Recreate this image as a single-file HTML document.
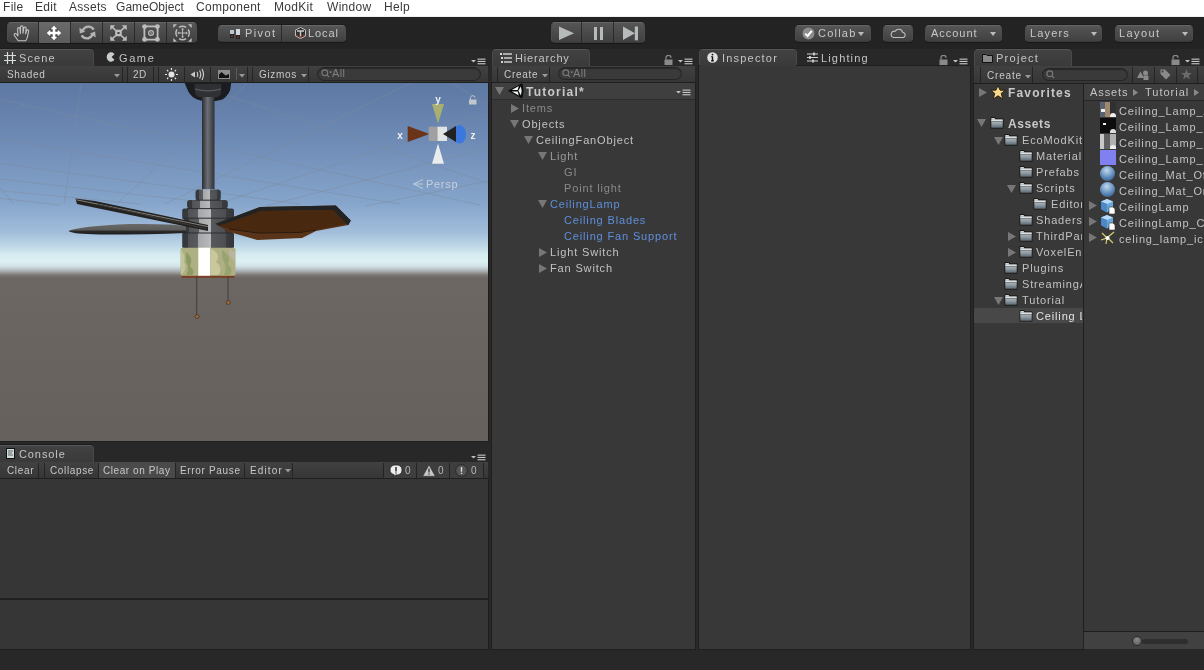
<!DOCTYPE html>
<html><head><meta charset="utf-8">
<style>
*{margin:0;padding:0;box-sizing:border-box}
html,body{width:1204px;height:670px;overflow:hidden;background:#282828;font-family:"Liberation Sans",sans-serif;}
.a{position:absolute}
.t{position:absolute;will-change:transform;white-space:nowrap;font-size:11px;letter-spacing:0.6px;color:#c4c4c4;line-height:16px}
#menu{left:0;top:0;width:1204px;height:17px;background:#fff;border-bottom:1px solid #f0f0f0}
#menu span{position:absolute;will-change:transform;top:0;font-size:12px;line-height:15px;color:#3a3a3a;letter-spacing:0.3px}
#tb{left:0;top:17px;width:1204px;height:32px;background:#232323}
.btn{position:absolute;border-radius:4px;background:linear-gradient(#555555,#404040);border:1px solid #4c4c4c;border-top-color:#666;border-bottom-color:#3a3a3a;box-shadow:0 1px 0 #181818,0 -1px 0 #1c1c1c}
.tab{position:absolute;top:49px;height:17px;border-radius:4px 4px 0 0;background:linear-gradient(#424242,#3a3a3a);border:1px solid #4a4a4a;border-top-color:#555;border-bottom:none;box-shadow:0 -1px 0 #1e1e1e}
.panel{position:absolute;background:#383838;box-shadow:0 0 0 1px #1f1f1f}
.strip{position:absolute;background:linear-gradient(#414141,#363636);border-bottom:1px solid #1c1c1c}
</style></head><body><svg width="0" height="0" style="position:absolute"><defs><linearGradient id="fg" x1="0" y1="0" x2="0" y2="1"><stop offset="0" stop-color="#d0d4d4"/><stop offset="0.45" stop-color="#a8b0b4"/><stop offset="1" stop-color="#5c6c78"/></linearGradient></defs></svg>
<div id="menu" class="a">
<span style="left:3px">File</span><span style="left:35px">Edit</span><span style="left:69px">Assets</span><span style="left:116px;letter-spacing:0.05px">GameObject</span><span style="left:196px">Component</span><span style="left:274px">ModKit</span><span style="left:327px">Window</span><span style="left:384px">Help</span>
</div>
<div id="tb" class="a"></div>
<!-- tool buttons -->
<div class="btn" style="left:7px;top:22px;width:190px;height:21px"></div>
<div class="a" style="left:38px;top:22px;width:32px;height:21px;background:linear-gradient(#6a6a6a,#5c5c5c)"></div>
<div class="a" style="left:38px;top:22px;width:1px;height:21px;background:#2a2a2a"></div>
<div class="a" style="left:70px;top:22px;width:1px;height:21px;background:#2a2a2a"></div>
<div class="a" style="left:102px;top:22px;width:1px;height:21px;background:#2a2a2a"></div>
<div class="a" style="left:134px;top:22px;width:1px;height:21px;background:#2a2a2a"></div>
<div class="a" style="left:166px;top:22px;width:1px;height:21px;background:#2a2a2a"></div>
<svg class="a" style="left:13px;top:25px" width="18" height="17" viewBox="0 0 18 17" fill="none" stroke="#c4c4c4" stroke-width="1.1" stroke-linejoin="round" stroke-linecap="round">
<path d="M5.2 15.8 L1.6 10.8 Q0.6 9.4 1.8 8.6 Q2.8 8.2 3.8 9.4 L5 10.8 L4.6 4.2 Q4.6 2.6 5.8 2.6 Q6.8 2.6 7 4 L7.4 8.4 L7.4 2.2 Q7.6 0.8 8.8 0.8 Q10 0.9 10 2.2 L10 8.2 L10.8 3 Q11.2 1.8 12.3 2 Q13.3 2.3 13.1 3.6 L12.6 8.8 L13.6 5.6 Q14.1 4.6 15 4.9 Q15.9 5.3 15.6 6.5 L14.4 12.2 Q13.8 14.6 12.6 15.8 Z"/>
</svg>
<svg class="a" style="left:46px;top:25px" width="16" height="16" viewBox="0 0 16 16" fill="#fff" stroke="#222" stroke-width="0.5" stroke-linejoin="round">
<path d="M8 0.3 L12 4.6 L9.6 4.6 L9.6 6.4 L11.4 6.4 L11.4 4 L15.7 8 L11.4 12 L11.4 9.6 L9.6 9.6 L9.6 11.4 L12 11.4 L8 15.7 L4 11.4 L6.4 11.4 L6.4 9.6 L4.6 9.6 L4.6 12 L0.3 8 L4.6 4 L4.6 6.4 L6.4 6.4 L6.4 4.6 L4 4.6 Z"/>
</svg>
<svg class="a" style="left:79px;top:25px" width="17" height="15" viewBox="0 0 17 15" fill="none" stroke="#b4b4b4" stroke-width="2.4">
<path d="M3.6 5.4 Q5.8 1.6 9.4 1.6 Q13 1.6 14.6 4.6"/>
<path d="M13.4 9.6 Q11.4 13.4 7.8 13.4 Q4.4 13.4 2.6 10.4"/>
<path d="M0.4 2.6 L0.8 8.4 L6.2 6.8 Z" fill="#b4b4b4" stroke="none"/>
<path d="M16.6 12.6 L16.2 6.6 L10.8 8.4 Z" fill="#b4b4b4" stroke="none"/>
</svg>
<svg class="a" style="left:110px;top:25px" width="17" height="16" viewBox="0 0 17 16" fill="#bdbdbd">
<rect x="5.2" y="4.7" width="6.6" height="6.6"/><rect x="7.5" y="7" width="2" height="2" fill="#3a3a3a"/>
<path d="M0.3 0.3 H5.2 L0.3 5.2 Z M16.7 0.3 H11.8 L16.7 5.2 Z M0.3 15.7 H5.2 L0.3 10.8 Z M16.7 15.7 H11.8 L16.7 10.8 Z"/>
<path d="M2 2 L5.4 5.2 M15 2 L11.6 5.2 M2 14 L5.4 10.8 M15 14 L11.6 10.8" stroke="#bdbdbd" stroke-width="1.7"/>
</svg>
<svg class="a" style="left:142px;top:24px" width="18" height="18" viewBox="0 0 18 18" fill="#bdbdbd">
<rect x="2.4" y="2.4" width="13.2" height="13.2" fill="none" stroke="#bdbdbd" stroke-width="1.8"/>
<circle cx="2.6" cy="2.6" r="2.4"/><circle cx="15.4" cy="2.6" r="2.4"/><circle cx="2.6" cy="15.4" r="2.4"/><circle cx="15.4" cy="15.4" r="2.4"/>
<circle cx="9" cy="9" r="2.4" fill="none" stroke="#bdbdbd" stroke-width="1.2"/><circle cx="9" cy="9" r="0.8"/>
</svg>
<svg class="a" style="left:173px;top:24px" width="19" height="18" viewBox="0 0 19 18" fill="none" stroke="#bdbdbd" stroke-width="1.5">
<path d="M15.20 5.50 A6.6 6.6 0 0 1 15.20 12.50"/><path d="M13.10 14.60 A6.6 6.6 0 0 1 6.10 14.60"/><path d="M4.00 12.50 A6.6 6.6 0 0 1 4.00 5.50"/><path d="M6.10 3.40 A6.6 6.6 0 0 1 13.10 3.40"/>
<path d="M9.6 4.8 V13.2 M5.4 9 H13.8" stroke-width="1"/>
<path d="M9.6 3.8 L11 5.6 H8.2 Z M9.6 14.2 L11 12.4 H8.2 Z M4.4 9 L6.2 7.6 V10.4 Z M14.8 9 L13 7.6 V10.4 Z" fill="#bdbdbd" stroke="none"/>
<path d="M0.3 0.3 H4 L0.3 4 Z M18.7 0.3 H15 L18.7 4 Z M0.3 17.7 H4 L0.3 14 Z M18.7 17.7 H15 L18.7 14 Z" fill="#bdbdbd" stroke="none"/>
</svg>

<div class="btn" style="left:218px;top:25px;width:128px;height:17px"></div>
<div class="a" style="left:281px;top:25px;width:1px;height:17px;background:#2a2a2a"></div>
<svg class="a" style="left:230px;top:29px" width="11" height="10" viewBox="0 0 11 10"><rect x="0" y="1" width="4" height="7" fill="#bcc8cc"/><rect x="0" y="5" width="4" height="4" fill="#222"/><rect x="6" y="0" width="4" height="9" fill="#d0d8dc"/><rect x="6" y="6" width="4" height="4" fill="#222"/><circle cx="2" cy="7" r="0.8" fill="#c04020"/><circle cx="8" cy="8" r="0.8" fill="#c04020"/></svg>
<div class="t" style="left:245px;top:25px;line-height:17px;color:#c8c8c8;letter-spacing:1.4px">Pivot</div>
<svg class="a" style="left:295px;top:27px" width="11" height="12" viewBox="0 0 11 12"><path d="M5.5 0.5 L10.5 3 V9 L5.5 11.5 L0.5 9 V3 Z" fill="#303030" stroke="#bbb" stroke-width="1"/><path d="M2 4 H9 M5.5 4 V10" stroke="#ccc" stroke-width="1.4"/><circle cx="5.5" cy="10" r="0.9" fill="#c04020"/><circle cx="2" cy="8.6" r="0.8" fill="#c04020"/><circle cx="9" cy="8.6" r="0.8" fill="#c04020"/></svg>
<div class="t" style="left:308px;top:25px;line-height:17px;color:#c8c8c8;letter-spacing:0.9px">Local</div>

<div class="btn" style="left:551px;top:22px;width:94px;height:21px"></div>
<div class="a" style="left:581px;top:22px;width:1px;height:21px;background:#2a2a2a"></div>
<div class="a" style="left:613px;top:22px;width:1px;height:21px;background:#2a2a2a"></div>
<svg class="a" style="left:558px;top:26px" width="17" height="15" viewBox="0 0 17 15"><path d="M1 0.5 L16 7.3 L1 14 Z" fill="#b6baba"/></svg>
<div class="a" style="left:594px;top:27px;width:3px;height:13px;background:#b6baba"></div>
<div class="a" style="left:600px;top:27px;width:3px;height:13px;background:#b6baba"></div>
<svg class="a" style="left:622px;top:26px" width="17" height="15" viewBox="0 0 17 15"><path d="M1 0.5 L13 7.3 L1 14 Z" fill="#b6baba"/><rect x="12.8" y="0.5" width="3.2" height="13.8" fill="#b6baba"/></svg>

<div class="btn" style="left:795px;top:25px;width:76px;height:17px"></div>
<svg class="a" style="left:802px;top:27px" width="13" height="13" viewBox="0 0 13 13"><circle cx="6.5" cy="6.5" r="6" fill="#8c8c8c"/><path d="M3.2 6.6 L5.6 9 L9.8 3.8" fill="none" stroke="#fff" stroke-width="2"/></svg>
<div class="t" style="left:818px;top:25px;line-height:17px;color:#c8c8c8;letter-spacing:1.22px">Collab</div>
<svg class="a" style="left:858px;top:32px" width="7" height="4"><path d="M0 0 H6 L3 4 Z" fill="#bbb"/></svg>
<div class="btn" style="left:883px;top:25px;width:30px;height:17px"></div>
<svg class="a" style="left:890px;top:27px" width="16" height="12" viewBox="0 0 16 12" fill="none" stroke="#c0c0c0" stroke-width="1.1"><path d="M3.5 10.5 H12.5 A2.6 2.6 0 0 0 12.6 5.3 A4 4 0 0 0 5.2 4.3 A3 3 0 0 0 3.5 10.5 Z"/></svg>
<div class="btn" style="left:925px;top:25px;width:77px;height:17px"></div>
<div class="t" style="left:931px;top:25px;line-height:17px;color:#c8c8c8;letter-spacing:0.97px">Account</div>
<svg class="a" style="left:990px;top:32px" width="7" height="4"><path d="M0 0 H6 L3 4 Z" fill="#bbb"/></svg>
<div class="btn" style="left:1025px;top:25px;width:77px;height:17px"></div>
<div class="t" style="left:1030px;top:25px;line-height:17px;color:#c8c8c8;letter-spacing:1.15px">Layers</div>
<svg class="a" style="left:1091px;top:32px" width="7" height="4"><path d="M0 0 H6 L3 4 Z" fill="#bbb"/></svg>
<div class="btn" style="left:1115px;top:25px;width:78px;height:17px"></div>
<div class="t" style="left:1119px;top:25px;line-height:17px;color:#c8c8c8;letter-spacing:1.4px">Layout</div>
<svg class="a" style="left:1182px;top:32px" width="7" height="4"><path d="M0 0 H6 L3 4 Z" fill="#bbb"/></svg>

<div class="tab" style="left:-4px;width:98px"></div>
<svg class="a" style="left:4px;top:52px" width="12" height="12" viewBox="0 0 12 12" stroke="#d8dcdc" stroke-width="1.2"><path d="M3.5 0 V12 M8.5 0 V12 M0 3.5 H12 M0 8.5 H12"/></svg>
<div class="t" style="left:19px;top:50px;font-size:11px;letter-spacing:1.1px;color:#c4c4c4;line-height:17px;">Scene</div>
<svg class="a" style="left:106px;top:52px" width="9" height="10" viewBox="0 0 9 10"><path d="M8.5 2.2 A4.3 4.8 0 1 0 8.5 7.8 L5.6 5 Z" fill="#c8cccc"/></svg>
<div class="t" style="left:119px;top:50px;font-size:11px;letter-spacing:1.6px;color:#c4c4c4;line-height:17px;">Game</div>
<svg class="a" style="left:471px;top:58px" width="15" height="7" viewBox="0 0 15 7"><path d="M0 2 H5 L2.5 4.4 Z" fill="#c0c0c0"/><rect x="6.5" y="0.6" width="8" height="1.1" fill="#c8c8c8"/><rect x="6.5" y="2.9" width="8" height="1.1" fill="#c8c8c8"/><rect x="6.5" y="5.2" width="8" height="1.1" fill="#c8c8c8"/></svg>
<div class="strip" style="left:0;top:66px;width:488px;height:17px"></div>
<div class="a" style="left:122px;top:67px;width:1px;height:15px;background:#242424"></div>
<div class="a" style="left:127px;top:67px;width:1px;height:15px;background:#242424"></div>
<div class="a" style="left:153px;top:67px;width:1px;height:15px;background:#242424"></div>
<div class="a" style="left:158px;top:67px;width:1px;height:15px;background:#242424"></div>
<div class="a" style="left:184px;top:67px;width:1px;height:15px;background:#242424"></div>
<div class="a" style="left:210px;top:67px;width:1px;height:15px;background:#242424"></div>
<div class="a" style="left:247px;top:67px;width:1px;height:15px;background:#242424"></div>
<div class="a" style="left:252px;top:67px;width:1px;height:15px;background:#242424"></div>
<div class="a" style="left:308px;top:67px;width:1px;height:15px;background:#242424"></div>
<div class="a" style="left:236px;top:68px;width:1px;height:12px;background:#5a5a5a"></div>
<div class="t" style="left:7px;top:67px;font-size:10px;letter-spacing:0.68px;color:#c8c8c8;line-height:16px;">Shaded</div>
<svg class="a" style="left:114px;top:74px" width="6" height="4"><path d="M0 0 H6 L3 3.5 Z" fill="#999"/></svg>
<div class="t" style="left:133px;top:67px;font-size:10px;letter-spacing:0.5px;color:#c8c8c8;line-height:16px;">2D</div>
<svg class="a" style="left:165px;top:68px" width="13" height="13" viewBox="0 0 13 13"><circle cx="6.5" cy="6.5" r="3" fill="#e4e4e4"/><path d="M6.5 0 V2 M6.5 11 V13 M0 6.5 H2 M11 6.5 H13 M2 2 L3.3 3.3 M9.7 9.7 L11 11 M11 2 L9.7 3.3 M3.3 9.7 L2 11" stroke="#e4e4e4" stroke-width="1.2"/></svg>
<svg class="a" style="left:190px;top:68px" width="15" height="13" viewBox="0 0 15 13"><path d="M0.5 6.5 L5 3.5 V9.5 Z" fill="#c8c8c8"/><path d="M7 4 Q8.5 6.5 7 9 M9.5 2.5 Q12 6.5 9.5 10.5 M12 1 Q15 6.5 12 12" fill="none" stroke="#c8c8c8" stroke-width="1.2"/></svg>
<svg class="a" style="left:218px;top:70px" width="12" height="9" viewBox="0 0 12 9"><rect x="0" y="0" width="12" height="9" fill="#8c8c8c"/><path d="M1 8 V4.4 L3.5 2 L7.6 5.6 L11 4 V8 Z" fill="#111"/></svg>
<svg class="a" style="left:239px;top:74px" width="6" height="4"><path d="M0 0 H6 L3 3.5 Z" fill="#999"/></svg>
<div class="t" style="left:259px;top:67px;font-size:10px;letter-spacing:0.67px;color:#c8c8c8;line-height:16px;">Gizmos</div>
<svg class="a" style="left:301px;top:74px" width="6" height="4"><path d="M0 0 H6 L3 3.5 Z" fill="#999"/></svg>
<div class="a" style="left:317px;top:67px;width:164px;height:14px;border-radius:7px;background:#3a3a3a;border:1px solid #252525;box-shadow:inset 0 1px 1px #2a2a2a"></div><svg class="a" style="left:321px;top:69px" width="12" height="9" viewBox="0 0 12 9" fill="none" stroke="#7a7a7a" stroke-width="1.1"><circle cx="3.8" cy="3.8" r="2.9"/><path d="M5.9 5.9 L8 8"/><path d="M8 2.5 H11.5 L9.75 4.5 Z" fill="#7a7a7a" stroke="none"/></svg><div class="t" style="left:332px;top:65px;font-size:11px;letter-spacing:0.3px;color:#808080;line-height:16px;">All</div>
<div class="a" id="scene" style="box-shadow:0 0 0 1px #1f1f1f;left:0;top:83px;width:488px;height:358px;background:linear-gradient(#5d78a3 0px,#6f8cb6 60px,#86a5cb 120px,#a2bedb 150px,#c4dce8 165px,#d6ecf0 172px,#dcf0f2 178px,#d4e4e8 183px,#bcc8cc 186px,#a0a4a4 189px,#7c7874 192px,#6c6762 195px,#6a6560 230px,#66615c 358px)"></div>
<svg class="a" style="left:0;top:83px" width="488" height="358" viewBox="0 83 488 358">
<defs>
<linearGradient id="rod" x1="0" x2="1" y1="0" y2="0"><stop offset="0" stop-color="#2a2c30"/><stop offset="0.45" stop-color="#6c7076"/><stop offset="1" stop-color="#2e3034"/></linearGradient>
<linearGradient id="body" x1="0" x2="1"><stop offset="0" stop-color="#36383c"/><stop offset="0.12" stop-color="#36383c"/><stop offset="0.12" stop-color="#505256"/><stop offset="0.31" stop-color="#5a5c60"/><stop offset="0.31" stop-color="#a4a6a8"/><stop offset="0.56" stop-color="#b8babc"/><stop offset="0.56" stop-color="#56585c"/><stop offset="0.85" stop-color="#4c4e52"/><stop offset="0.85" stop-color="#3a3c40"/><stop offset="1" stop-color="#34363a"/></linearGradient>
<linearGradient id="cup" x1="0" x2="1"><stop offset="0" stop-color="#98a070"/><stop offset="0.3" stop-color="#b4b888"/><stop offset="0.32" stop-color="#fff"/><stop offset="0.55" stop-color="#fff"/><stop offset="0.56" stop-color="#b8bc90"/><stop offset="1" stop-color="#a0a478"/></linearGradient>
<linearGradient id="bl2" x1="0" y1="0" x2="0" y2="1"><stop offset="0" stop-color="#6a6a68"/><stop offset="0.55" stop-color="#5c5c5a"/><stop offset="0.7" stop-color="#2a2a2a"/><stop offset="1" stop-color="#1e1e1e"/></linearGradient>
</defs>
<g stroke="#7e8c9c" stroke-opacity="0.6" stroke-width="0.8" fill="none">
<path d="M0 99.5 L480 205"/>
<path d="M0 139.2 L400 204"/>
<path d="M0 163.5 L300 204"/>
<path d="M0 179 L220 204"/>
<path d="M0 190.6 L140 204"/>
<path d="M0 198.4 L60 205"/>
<path d="M190 83 L488 183"/>
<path d="M453.7 84 L488 105.3"/>
<path d="M81.5 83 L64 204.2"/>
<path d="M116.4 204.2 L248 83"/>
<path d="M0 187.7 L13.6 204.2"/>
<path d="M165 204 L410 83"/>
<path d="M218 204 L488 113"/>
<path d="M266 206 L488 148"/>
<path d="M365.8 206 L488 181"/>
</g>
<!-- canopy -->
<path d="M184.6 83 L188.4 91.7 Q192 97.6 197.2 99.4 Q203 101.6 208.8 101.4 Q216 101.4 222.4 99.4 Q228 96 230.2 89.7 L231.2 83 Z" fill="#1a1c20"/>
<path d="M194.3 83.9 L195.2 93.6 Q197 97.5 202 97.5 H214.7 Q219.5 97.5 220.9 93.6 L221.5 83.9 Z" fill="#2e3034"/>
<path d="M195 89.2 Q208 92.5 221 89.2" stroke="#55585c" stroke-width="1.3" fill="none"/>
<rect x="202" y="97" width="12.5" height="92" fill="url(#rod)"/>
<!-- motor tiers -->
<rect x="195.5" y="189.5" width="25.3" height="11" rx="3" fill="url(#body)"/>
<rect x="187" y="200" width="40.8" height="8.6" rx="3" fill="url(#body)"/>
<rect x="182.2" y="208.4" width="51.8" height="10" rx="2" fill="url(#body)"/>
<rect x="183.6" y="218" width="49" height="15.2" fill="url(#body)"/>
<rect x="182.2" y="233" width="51.8" height="15" rx="1.5" fill="url(#body)"/>
<path d="M195.5 200.2 H220.8 M187 208.6 H227.8 M182.2 218.2 H234 M182.2 233 H234" stroke="#2a2c30" stroke-width="1"/>
<!-- left blades -->
<path d="M68.4 231 Q80 226 130 224 Q170 223.5 186 226 L186 233 Q150 234.5 100 234.5 Q72 234 68.4 231 Z" fill="url(#bl2)"/>
<path d="M75.5 198.5 L95 201 L208 225 L208 231 L77 204 Z" fill="#242220"/>
<path d="M76.5 199.8 L208 226.6" stroke="#8c8a86" stroke-width="0.9"/>
<path d="M98 204.5 L206 228.6" stroke="#3e3c3a" stroke-width="1"/>
<!-- right blade -->
<path d="M215.6 223.7 L260 206.9 L335.8 205.6 L350.8 220.6 L348.3 225 L316 231 L302 238 L257.3 240 L228.7 231.8 L217.5 225 Z" fill="#5a3418"/>
<path d="M215.6 223.7 L260 206.9 L335.8 205.6 L350.8 220.6 L348.3 225 L346 224 L333 210 L262 211 L219 226 Z" fill="#232323"/>
<path d="M219 226 L262 211 L333 210 L346 224 L316 230 L300 232.5 L258 233 L229 229 Z" fill="#48290f"/>
<path d="M229 229 L258 233 L300 232.5 L316 230" stroke="#2a1a10" stroke-width="1" fill="none"/>
<!-- cup -->
<rect x="180.5" y="247.7" width="55" height="28.3" rx="2" fill="#aeb084"/>
<path d="M181 250 Q186 256 184 262 Q188 268 182 274 L181 274 Z" fill="#c4c49a"/>
<path d="M186 252 Q194 258 190 266 Q196 272 192 275 L186 275 Q190 268 186 262 Z" fill="#8c9a64"/>
<path d="M211 249 Q222 254 216 262 Q224 268 218 275 L211 275 Z" fill="#c8c89c"/>
<path d="M222 250 Q232 256 228 264 Q234 270 230 275 L224 275 Q228 266 222 258 Z" fill="#98a470"/>
<path d="M229 249 L235 252 L235 262 Q231 258 229 254 Z" fill="#b8b4a0"/>
<rect x="198.3" y="247.7" width="11.9" height="28.3" fill="#ffffff"/>
<rect x="181.5" y="275.8" width="53" height="2" fill="#7a3c22"/>
<!-- chains -->
<path d="M196.7 277 V315 M228 277 V301" stroke="#3a3a3a" stroke-width="0.9"/>
<circle cx="197" cy="316.5" r="2" fill="#9a6a3a" stroke="#3a2a1a" stroke-width="0.6"/>
<circle cx="228.3" cy="302.5" r="2" fill="#9a6a3a" stroke="#3a2a1a" stroke-width="0.6"/>
<!-- gizmo -->
<path d="M432 104 L444 104 L438 123.5 Z" fill="#a8b070"/>
<path d="M432 163.8 L444 163.8 L438 143.6 Z" fill="#e8ecec"/>
<path d="M407.7 126 L407.7 142 L429.5 134 Z" fill="#6a3418"/>
<rect x="428.7" y="126.7" width="9" height="14.3" fill="#a0a0a0"/>
<rect x="437.5" y="126.7" width="9.5" height="14.3" fill="#e2e4e4"/>
<ellipse cx="459.5" cy="134.3" rx="6.5" ry="9.3" fill="#3a78e0"/>
<path d="M443 134 L456 126 L456 142 Z" fill="#222"/>
<text x="400" y="138.5" font-family="Liberation Sans" font-weight="bold" font-size="10" fill="#f0f0f0" text-anchor="middle">x</text>
<text x="438" y="103" font-family="Liberation Sans" font-weight="bold" font-size="10" fill="#f0f0f0" text-anchor="middle">y</text>
<text x="473" y="138.5" font-family="Liberation Sans" font-weight="bold" font-size="10" fill="#f0f0f0" text-anchor="middle">z</text>
<path d="M470.5 99.5 V97.5 A2.3 2.3 0 0 1 475 97.5" fill="none" stroke="#c0c8cc" stroke-width="1"/>
<rect x="469" y="99.5" width="7.5" height="5" fill="#c0c8cc"/>
<path d="M423 179.5 L413.5 184 L423 188.5 M413.5 184 H423" fill="none" stroke="#c8d0dc" stroke-width="0.9"/>
<text x="426" y="188" font-family="Liberation Sans" font-size="11" letter-spacing="0.7" fill="#c8d0dc">Persp</text>
</svg>
<div class="tab" style="left:-4px;top:445px;width:98px"></div>
<svg class="a" style="left:6px;top:448px" width="9" height="11" viewBox="0 0 9 11"><rect x="0.5" y="0.5" width="8" height="10" fill="#cfdcdc" stroke="#111" stroke-width="1"/><path d="M2 3 H7 M2 5 H6 M2 7 H7" stroke="#555" stroke-width="0.9"/></svg>
<div class="t" style="left:19px;top:446px;font-size:11px;letter-spacing:0.9px;color:#c4c4c4;line-height:17px;">Console</div>
<svg class="a" style="left:471px;top:454px" width="15" height="7" viewBox="0 0 15 7"><path d="M0 2 H5 L2.5 4.4 Z" fill="#c0c0c0"/><rect x="6.5" y="0.6" width="8" height="1.1" fill="#c8c8c8"/><rect x="6.5" y="2.9" width="8" height="1.1" fill="#c8c8c8"/><rect x="6.5" y="5.2" width="8" height="1.1" fill="#c8c8c8"/></svg>
<div class="strip" style="left:0;top:462px;width:488px;height:17px"></div>
<div class="a" style="left:98px;top:462px;width:77px;height:16px;background:#4a4a4a"></div>
<div class="a" style="left:384px;top:462px;width:99px;height:16px;background:#3e3e3e"></div>
<div class="a" style="left:38px;top:463px;width:1px;height:15px;background:#242424"></div>
<div class="a" style="left:44px;top:463px;width:1px;height:15px;background:#242424"></div>
<div class="a" style="left:98px;top:463px;width:1px;height:15px;background:#242424"></div>
<div class="a" style="left:175px;top:463px;width:1px;height:15px;background:#242424"></div>
<div class="a" style="left:244px;top:463px;width:1px;height:15px;background:#242424"></div>
<div class="a" style="left:292px;top:463px;width:1px;height:15px;background:#242424"></div>
<div class="a" style="left:383px;top:463px;width:1px;height:15px;background:#242424"></div>
<div class="a" style="left:416px;top:463px;width:1px;height:15px;background:#242424"></div>
<div class="a" style="left:449px;top:463px;width:1px;height:15px;background:#242424"></div>
<div class="a" style="left:483px;top:463px;width:1px;height:15px;background:#242424"></div>
<div class="t" style="left:7px;top:463px;font-size:10px;letter-spacing:0.65px;color:#c8c8c8;line-height:16px;">Clear</div>
<div class="t" style="left:50px;top:463px;font-size:10px;letter-spacing:0.64px;color:#c8c8c8;line-height:16px;">Collapse</div>
<div class="t" style="left:103px;top:463px;font-size:10px;letter-spacing:0.575px;color:#c8c8c8;line-height:16px;">Clear on Play</div>
<div class="t" style="left:180px;top:463px;font-size:10px;letter-spacing:0.67px;color:#c8c8c8;line-height:16px;">Error Pause</div>
<div class="t" style="left:250px;top:463px;font-size:10px;letter-spacing:1.14px;color:#c8c8c8;line-height:16px;">Editor</div>
<svg class="a" style="left:285px;top:469px" width="6" height="4"><path d="M0 0 H6 L3 3.5 Z" fill="#999"/></svg>
<svg class="a" style="left:389px;top:464px" width="14" height="13" viewBox="0 0 14 13"><path d="M7 1 C11 1 13 3 13 6 C13 9 11 11 7 11 L4 12.5 L5 10.5 C2.5 10 1 8.5 1 6 C1 3 3 1 7 1 Z" fill="#eee" stroke="#222" stroke-width="0.8"/><path d="M7 3 V7.5 M7 8.6 V9.6" stroke="#222" stroke-width="1.4"/></svg>
<div class="t" style="left:405px;top:463px;font-size:10px;letter-spacing:0px;color:#b8b8b8;line-height:16px;">0</div>
<svg class="a" style="left:422px;top:464px" width="14" height="13" viewBox="0 0 14 13"><path d="M7 0.8 L13.3 12.3 H0.7 Z" fill="#c8c8c8" stroke="#333" stroke-width="0.7"/><path d="M7 4.5 V8.6 M7 9.6 V10.8" stroke="#333" stroke-width="1.3"/></svg>
<div class="t" style="left:438px;top:463px;font-size:10px;letter-spacing:0px;color:#b8b8b8;line-height:16px;">0</div>
<svg class="a" style="left:455px;top:464px" width="13" height="13" viewBox="0 0 13 13"><circle cx="6.5" cy="6.5" r="5.8" fill="#555" stroke="#222" stroke-width="0.8"/><path d="M6.5 3 V7.8 M6.5 8.8 V10" stroke="#ddd" stroke-width="1.4"/></svg>
<div class="t" style="left:471px;top:463px;font-size:10px;letter-spacing:0px;color:#b8b8b8;line-height:16px;">0</div>
<div class="panel" style="left:0;top:479px;width:488px;height:120px;background:#363636"></div>
<div class="a" style="left:0;top:598px;width:488px;height:2px;background:#222"></div>
<div class="panel" style="left:0;top:600px;width:488px;height:49px;background:#363636"></div>
<div class="tab" style="left:492px;width:98px"></div>
<svg class="a" style="left:500px;top:53px" width="12" height="10" viewBox="0 0 12 10" fill="#d8d8d8"><rect x="0" y="0" width="2" height="2"/><rect x="3" y="0.3" width="9" height="1.4"/><rect x="1" y="4" width="2" height="2"/><rect x="4" y="4.3" width="8" height="1.4"/><rect x="1" y="8" width="2" height="2"/><rect x="4" y="8.3" width="8" height="1.4"/></svg>
<div class="t" style="left:515px;top:50px;font-size:11px;letter-spacing:0.85px;color:#c4c4c4;line-height:17px;">Hierarchy</div>
<svg class="a" style="left:664px;top:55px" width="9" height="10" viewBox="0 0 9 10"><path d="M2 4.5 V2.8 A2.5 2.5 0 0 1 7 2.8" fill="none" stroke="#8a8a8a" stroke-width="1.3"/><rect x="0.5" y="4.5" width="8" height="5.5" fill="#8a8a8a"/></svg>
<svg class="a" style="left:678px;top:58px" width="15" height="7" viewBox="0 0 15 7"><path d="M0 2 H5 L2.5 4.4 Z" fill="#c0c0c0"/><rect x="6.5" y="0.6" width="8" height="1.1" fill="#c8c8c8"/><rect x="6.5" y="2.9" width="8" height="1.1" fill="#c8c8c8"/><rect x="6.5" y="5.2" width="8" height="1.1" fill="#c8c8c8"/></svg>
<div class="strip" style="left:492px;top:66px;width:203px;height:17px"></div>
<div class="a" style="left:497px;top:67px;width:1px;height:15px;background:#242424"></div>
<div class="a" style="left:549px;top:67px;width:1px;height:15px;background:#242424"></div>
<div class="t" style="left:504px;top:67px;font-size:10px;letter-spacing:0.72px;color:#c8c8c8;line-height:16px;">Create</div>
<svg class="a" style="left:542px;top:74px" width="6" height="4"><path d="M0 0 H6 L3 3.5 Z" fill="#999"/></svg>
<div class="a" style="left:558px;top:67px;width:124px;height:13px;border-radius:7px;background:#3a3a3a;border:1px solid #252525;box-shadow:inset 0 1px 1px #2a2a2a"></div><svg class="a" style="left:562px;top:69px" width="12" height="9" viewBox="0 0 12 9" fill="none" stroke="#7a7a7a" stroke-width="1.1"><circle cx="3.8" cy="3.8" r="2.9"/><path d="M5.9 5.9 L8 8"/><path d="M8 2.5 H11.5 L9.75 4.5 Z" fill="#7a7a7a" stroke="none"/></svg><div class="t" style="left:573px;top:65px;font-size:11px;letter-spacing:0.3px;color:#808080;line-height:16px;">All</div>
<div class="panel" style="left:492px;top:83px;width:203px;height:566px"></div>
<div class="a" style="left:492px;top:83px;width:203px;height:17px;background:#3f3f3f;border-bottom:1px solid #2c2c2c"></div>
<svg class="a" style="left:495px;top:87px" width="9" height="8"><path d="M0 0 L9 0 L4.5 8 Z" fill="#777"/></svg>
<svg class="a" style="left:505px;top:83px" width="20" height="17" viewBox="0 0 20 17"><path d="M3.6 7.8 L17 0.8 Q19.4 7.8 17 15 Z" fill="#0a0a0a" stroke="#0a0a0a" stroke-width="0.8" stroke-linejoin="round"/><path d="M6.8 7.1 L13.8 3 L12.7 7.1 Z M6.8 8.5 L13.8 12.6 L12.7 8.5 Z" fill="#f4f4f4"/><path d="M13.4 7.8 L15.9 3.2 Q17.4 7.8 15.9 12.4 Z" fill="#e8f0f0"/></svg>
<div class="t" style="left:526px;top:84px;font-size:12px;letter-spacing:1.25px;color:#c8c8c8;line-height:16px;font-weight:bold;">Tutorial*</div>
<svg class="a" style="left:676px;top:89px" width="15" height="7" viewBox="0 0 15 7"><path d="M0 2 H5 L2.5 4.4 Z" fill="#c0c0c0"/><rect x="6.5" y="0.6" width="8" height="1.1" fill="#c8c8c8"/><rect x="6.5" y="2.9" width="8" height="1.1" fill="#c8c8c8"/><rect x="6.5" y="5.2" width="8" height="1.1" fill="#c8c8c8"/></svg>
<svg class="a" style="left:511px;top:104px" width="8" height="9"><path d="M0 0 L8 4.5 L0 9 Z" fill="#777"/></svg>
<div class="t" style="left:522px;top:100px;font-size:11px;letter-spacing:0.85px;color:#8a8a8a;line-height:16px;">Items</div>
<svg class="a" style="left:510px;top:120px" width="9" height="8"><path d="M0 0 L9 0 L4.5 8 Z" fill="#777"/></svg>
<div class="t" style="left:522px;top:116px;font-size:11px;letter-spacing:0.85px;color:#c2c2c2;line-height:16px;">Objects</div>
<svg class="a" style="left:524px;top:136px" width="9" height="8"><path d="M0 0 L9 0 L4.5 8 Z" fill="#777"/></svg>
<div class="t" style="left:536px;top:132px;font-size:11px;letter-spacing:0.85px;color:#c2c2c2;line-height:16px;">CeilingFanObject</div>
<svg class="a" style="left:538px;top:152px" width="9" height="8"><path d="M0 0 L9 0 L4.5 8 Z" fill="#777"/></svg>
<div class="t" style="left:550px;top:148px;font-size:11px;letter-spacing:0.85px;color:#9a9a9a;line-height:16px;">Light</div>
<div class="t" style="left:564px;top:164px;font-size:11px;letter-spacing:0.85px;color:#8a8a8a;line-height:16px;">GI</div>
<div class="t" style="left:564px;top:180px;font-size:11px;letter-spacing:0.85px;color:#8a8a8a;line-height:16px;">Point light</div>
<svg class="a" style="left:538px;top:200px" width="9" height="8"><path d="M0 0 L9 0 L4.5 8 Z" fill="#777"/></svg>
<div class="t" style="left:550px;top:196px;font-size:11px;letter-spacing:0.85px;color:#5d8fdb;line-height:16px;">CeilingLamp</div>
<div class="t" style="left:564px;top:212px;font-size:11px;letter-spacing:0.85px;color:#5d8fdb;line-height:16px;">Ceiling Blades</div>
<div class="t" style="left:564px;top:228px;font-size:11px;letter-spacing:0.85px;color:#5d8fdb;line-height:16px;">Ceiling Fan Support</div>
<svg class="a" style="left:539px;top:248px" width="8" height="9"><path d="M0 0 L8 4.5 L0 9 Z" fill="#777"/></svg>
<div class="t" style="left:550px;top:244px;font-size:11px;letter-spacing:0.85px;color:#c2c2c2;line-height:16px;">Light Switch</div>
<svg class="a" style="left:539px;top:264px" width="8" height="9"><path d="M0 0 L8 4.5 L0 9 Z" fill="#777"/></svg>
<div class="t" style="left:550px;top:260px;font-size:11px;letter-spacing:0.85px;color:#c2c2c2;line-height:16px;">Fan Switch</div>
<div class="tab" style="left:699px;width:98px"></div>
<svg class="a" style="left:707px;top:52px" width="11" height="11" viewBox="0 0 11 11"><circle cx="5.5" cy="5.5" r="5.3" fill="#e0e0e0"/><path d="M5.5 4.5 V8.5 M4.2 8.7 H6.8 M4.3 4.6 H5.5" stroke="#111" stroke-width="1.4"/><circle cx="5.5" cy="2.6" r="0.9" fill="#111"/></svg>
<div class="t" style="left:722px;top:50px;font-size:11px;letter-spacing:1.2px;color:#c4c4c4;line-height:17px;">Inspector</div>
<svg class="a" style="left:807px;top:52px" width="11" height="11" viewBox="0 0 11 11" stroke="#d0d0d0" stroke-width="1.2"><path d="M0 2 H11 M0 5.5 H11 M0 9 H11"/><path d="M7 0.5 V3.5 M3 4 V7 M6 7.5 V10.5" stroke-width="1.8"/></svg>
<div class="t" style="left:821px;top:50px;font-size:11px;letter-spacing:1.15px;color:#c4c4c4;line-height:17px;">Lighting</div>
<svg class="a" style="left:939px;top:55px" width="9" height="10" viewBox="0 0 9 10"><path d="M2 4.5 V2.8 A2.5 2.5 0 0 1 7 2.8" fill="none" stroke="#8a8a8a" stroke-width="1.3"/><rect x="0.5" y="4.5" width="8" height="5.5" fill="#8a8a8a"/></svg>
<svg class="a" style="left:953px;top:58px" width="15" height="7" viewBox="0 0 15 7"><path d="M0 2 H5 L2.5 4.4 Z" fill="#c0c0c0"/><rect x="6.5" y="0.6" width="8" height="1.1" fill="#c8c8c8"/><rect x="6.5" y="2.9" width="8" height="1.1" fill="#c8c8c8"/><rect x="6.5" y="5.2" width="8" height="1.1" fill="#c8c8c8"/></svg>
<div class="panel" style="left:699px;top:66px;width:271px;height:583px"></div><div class="a" style="left:700px;top:65px;width:96px;height:2px;background:#393939"></div>
<div class="tab" style="left:974px;width:98px"></div>
<svg class="a" style="left:982px;top:53px" width="11" height="10" viewBox="0 0 11 10"><path d="M0.5 1.5 H4 L5 2.5 H10.5 V9.5 H0.5 Z" fill="#8a8a8a" stroke="#111" stroke-width="1"/></svg>
<div class="t" style="left:996px;top:50px;font-size:11px;letter-spacing:1.28px;color:#c4c4c4;line-height:17px;">Project</div>
<svg class="a" style="left:1171px;top:55px" width="9" height="10" viewBox="0 0 9 10"><path d="M2 4.5 V2.8 A2.5 2.5 0 0 1 7 2.8" fill="none" stroke="#8a8a8a" stroke-width="1.3"/><rect x="0.5" y="4.5" width="8" height="5.5" fill="#8a8a8a"/></svg>
<svg class="a" style="left:1185px;top:58px" width="15" height="7" viewBox="0 0 15 7"><path d="M0 2 H5 L2.5 4.4 Z" fill="#c0c0c0"/><rect x="6.5" y="0.6" width="8" height="1.1" fill="#c8c8c8"/><rect x="6.5" y="2.9" width="8" height="1.1" fill="#c8c8c8"/><rect x="6.5" y="5.2" width="8" height="1.1" fill="#c8c8c8"/></svg>
<div class="strip" style="left:974px;top:66px;width:230px;height:18px"></div>
<div class="a" style="left:980px;top:67px;width:1px;height:16px;background:#242424"></div>
<div class="a" style="left:1032px;top:67px;width:1px;height:16px;background:#242424"></div>
<div class="a" style="left:1132px;top:67px;width:1px;height:16px;background:#242424"></div>
<div class="a" style="left:1154px;top:67px;width:1px;height:16px;background:#242424"></div>
<div class="a" style="left:1176px;top:67px;width:1px;height:16px;background:#242424"></div>
<div class="a" style="left:1197px;top:67px;width:1px;height:16px;background:#242424"></div>
<div class="t" style="left:987px;top:68px;font-size:10px;letter-spacing:0.82px;color:#c8c8c8;line-height:16px;">Create</div>
<svg class="a" style="left:1025px;top:75px" width="6" height="4"><path d="M0 0 H6 L3 3.5 Z" fill="#999"/></svg>
<div class="a" style="left:1042px;top:68px;width:86px;height:13px;border-radius:7px;background:#3a3a3a;border:1px solid #252525;box-shadow:inset 0 1px 1px #2a2a2a"></div><svg class="a" style="left:1046px;top:70px" width="12" height="9" viewBox="0 0 12 9" fill="none" stroke="#7a7a7a" stroke-width="1.1"><circle cx="3.8" cy="3.8" r="2.9"/><path d="M5.9 5.9 L8 8"/></svg>
<svg class="a" style="left:1137px;top:70px" width="12" height="10" viewBox="0 0 12 10" fill="#8a8a8a"><path d="M3.5 1.5 L7 8 H0 Z"/><circle cx="8.5" cy="3" r="2.5"/><rect x="6.5" y="5.5" width="5" height="4.5"/></svg>
<svg class="a" style="left:1160px;top:69px" width="11" height="11" viewBox="0 0 11 11" fill="#8a8a8a"><path d="M0.5 0.5 H5 L10.5 6 L6 10.5 L0.5 5 Z"/><circle cx="2.6" cy="2.6" r="1" fill="#3a3a3a"/></svg>
<svg class="a" style="left:1181px;top:69px" width="11" height="11" viewBox="0 0 11 11" fill="#6a6a6a"><path d="M5.5 0.3 L7 4 H10.8 L7.8 6.5 L8.9 10.5 L5.5 8.1 L2.1 10.5 L3.2 6.5 L0.2 4 H4 Z"/></svg>
<div class="panel" style="left:974px;top:84px;width:109px;height:565px;background:#383838"></div>
<div class="a" style="left:1083px;top:84px;width:1px;height:565px;background:#232323"></div>
<div class="panel" style="left:1084px;top:84px;width:120px;height:548px;background:#383838"></div>
<div class="a" style="left:1084px;top:84px;width:120px;height:17px;background:#3e3e3e;border-bottom:1px solid #262626"></div>
<div class="t" style="left:1090px;top:84px;font-size:11px;letter-spacing:0.9px;color:#c4c4c4;line-height:17px;">Assets</div>
<svg class="a" style="left:1133px;top:89px" width="5" height="7"><path d="M0 0 L5 3.5 L0 7 Z" fill="#8a8a8a"/></svg>
<div class="t" style="left:1145px;top:84px;font-size:11px;letter-spacing:0.99px;color:#c4c4c4;line-height:17px;">Tutorial</div>
<svg class="a" style="left:1194px;top:89px" width="5" height="7"><path d="M0 0 L5 3.5 L0 7 Z" fill="#8a8a8a"/></svg>
<div class="a" style="left:1084px;top:631px;width:120px;height:1px;background:#1e1e1e"></div>
<div class="a" style="left:1084px;top:632px;width:120px;height:17px;background:#414141"></div>
<div class="a" style="left:1142px;top:639px;width:46px;height:5px;border-radius:3px;background:#2e2e2e"></div>
<div class="a" style="left:1132px;top:636px;width:10px;height:10px;border-radius:50%;background:radial-gradient(circle at 50% 35%,#8a8a8a,#555);border:1px solid #2a2a2a"></div>
<svg class="a" style="left:979px;top:88px" width="8" height="9"><path d="M0 0 L8 4.5 L0 9 Z" fill="#777"/></svg>
<svg class="a" style="left:990px;top:85px" width="16" height="15" viewBox="0 0 16 15"><path d="M8 0.6 L10.1 5.2 H15.3 L11.2 8.4 L12.8 14 L8 10.8 L3.2 14 L4.8 8.4 L0.7 5.2 H5.9 Z" fill="#f6d98a" stroke="#2a1a08" stroke-width="0.9" stroke-linejoin="round"/></svg>
<div class="t" style="left:1008px;top:85px;font-size:12px;letter-spacing:1.15px;color:#c8c8c8;line-height:17px;font-weight:bold;">Favorites</div>
<svg class="a" style="left:977px;top:119px" width="9" height="8"><path d="M0 0 L9 0 L4.5 8 Z" fill="#777"/></svg>
<svg class="a" style="left:990px;top:116px" width="14" height="13" viewBox="0 0 14 13"><defs></defs><path d="M0.6 1.2 H5 L6 2.4 H13.4 V12.4 H0.6 Z" fill="#101010"/><path d="M1.3 2 H4.6 L5.4 3.2 H12.7 V11.7 H1.3 Z" fill="url(#fg)"/><path d="M1.3 4.6 H12.7" stroke="#e8ecec" stroke-width="0.8"/><path d="M1.3 5.6 H12.7" stroke="#505860" stroke-width="0.6"/></svg>
<div class="t" style="left:1008px;top:116px;font-size:12px;letter-spacing:0.6px;color:#c8c8c8;line-height:17px;font-weight:bold;">Assets</div>
<div class="a" style="left:974px;top:308px;width:109px;height:15px;background:#484848"></div>
<div class="a" style="left:974px;top:0;width:108px;height:670px;overflow:hidden"><svg class="a" style="left:-974px;margin-left:994px;top:137px" width="9" height="8"><path d="M0 0 L9 0 L4.5 8 Z" fill="#777"/></svg><svg class="a" style="left:-974px;margin-left:1004px;top:133px" width="14" height="13" viewBox="0 0 14 13"><defs></defs><path d="M0.6 1.2 H5 L6 2.4 H13.4 V12.4 H0.6 Z" fill="#101010"/><path d="M1.3 2 H4.6 L5.4 3.2 H12.7 V11.7 H1.3 Z" fill="url(#fg)"/><path d="M1.3 4.6 H12.7" stroke="#e8ecec" stroke-width="0.8"/><path d="M1.3 5.6 H12.7" stroke="#505860" stroke-width="0.6"/></svg><div class="t" style="left:-974px;margin-left:1022px;top:132px;font-size:11px;letter-spacing:0.85px;color:#c2c2c2;line-height:16px;">EcoModKit</div><svg class="a" style="left:-974px;margin-left:1019px;top:149px" width="14" height="13" viewBox="0 0 14 13"><defs></defs><path d="M0.6 1.2 H5 L6 2.4 H13.4 V12.4 H0.6 Z" fill="#101010"/><path d="M1.3 2 H4.6 L5.4 3.2 H12.7 V11.7 H1.3 Z" fill="url(#fg)"/><path d="M1.3 4.6 H12.7" stroke="#e8ecec" stroke-width="0.8"/><path d="M1.3 5.6 H12.7" stroke="#505860" stroke-width="0.6"/></svg><div class="t" style="left:-974px;margin-left:1036px;top:148px;font-size:11px;letter-spacing:0.85px;color:#c2c2c2;line-height:16px;">Materials</div><svg class="a" style="left:-974px;margin-left:1019px;top:165px" width="14" height="13" viewBox="0 0 14 13"><defs></defs><path d="M0.6 1.2 H5 L6 2.4 H13.4 V12.4 H0.6 Z" fill="#101010"/><path d="M1.3 2 H4.6 L5.4 3.2 H12.7 V11.7 H1.3 Z" fill="url(#fg)"/><path d="M1.3 4.6 H12.7" stroke="#e8ecec" stroke-width="0.8"/><path d="M1.3 5.6 H12.7" stroke="#505860" stroke-width="0.6"/></svg><div class="t" style="left:-974px;margin-left:1036px;top:164px;font-size:11px;letter-spacing:0.85px;color:#c2c2c2;line-height:16px;">Prefabs</div><svg class="a" style="left:-974px;margin-left:1007px;top:185px" width="9" height="8"><path d="M0 0 L9 0 L4.5 8 Z" fill="#777"/></svg><svg class="a" style="left:-974px;margin-left:1019px;top:181px" width="14" height="13" viewBox="0 0 14 13"><defs></defs><path d="M0.6 1.2 H5 L6 2.4 H13.4 V12.4 H0.6 Z" fill="#101010"/><path d="M1.3 2 H4.6 L5.4 3.2 H12.7 V11.7 H1.3 Z" fill="url(#fg)"/><path d="M1.3 4.6 H12.7" stroke="#e8ecec" stroke-width="0.8"/><path d="M1.3 5.6 H12.7" stroke="#505860" stroke-width="0.6"/></svg><div class="t" style="left:-974px;margin-left:1036px;top:180px;font-size:11px;letter-spacing:0.85px;color:#c2c2c2;line-height:16px;">Scripts</div><svg class="a" style="left:-974px;margin-left:1033px;top:197px" width="14" height="13" viewBox="0 0 14 13"><defs></defs><path d="M0.6 1.2 H5 L6 2.4 H13.4 V12.4 H0.6 Z" fill="#101010"/><path d="M1.3 2 H4.6 L5.4 3.2 H12.7 V11.7 H1.3 Z" fill="url(#fg)"/><path d="M1.3 4.6 H12.7" stroke="#e8ecec" stroke-width="0.8"/><path d="M1.3 5.6 H12.7" stroke="#505860" stroke-width="0.6"/></svg><div class="t" style="left:-974px;margin-left:1051px;top:196px;font-size:11px;letter-spacing:0.85px;color:#c2c2c2;line-height:16px;">Editor</div><svg class="a" style="left:-974px;margin-left:1019px;top:213px" width="14" height="13" viewBox="0 0 14 13"><defs></defs><path d="M0.6 1.2 H5 L6 2.4 H13.4 V12.4 H0.6 Z" fill="#101010"/><path d="M1.3 2 H4.6 L5.4 3.2 H12.7 V11.7 H1.3 Z" fill="url(#fg)"/><path d="M1.3 4.6 H12.7" stroke="#e8ecec" stroke-width="0.8"/><path d="M1.3 5.6 H12.7" stroke="#505860" stroke-width="0.6"/></svg><div class="t" style="left:-974px;margin-left:1036px;top:212px;font-size:11px;letter-spacing:0.85px;color:#c2c2c2;line-height:16px;">Shaders</div><svg class="a" style="left:-974px;margin-left:1008px;top:232px" width="8" height="9"><path d="M0 0 L8 4.5 L0 9 Z" fill="#777"/></svg><svg class="a" style="left:-974px;margin-left:1019px;top:229px" width="14" height="13" viewBox="0 0 14 13"><defs></defs><path d="M0.6 1.2 H5 L6 2.4 H13.4 V12.4 H0.6 Z" fill="#101010"/><path d="M1.3 2 H4.6 L5.4 3.2 H12.7 V11.7 H1.3 Z" fill="url(#fg)"/><path d="M1.3 4.6 H12.7" stroke="#e8ecec" stroke-width="0.8"/><path d="M1.3 5.6 H12.7" stroke="#505860" stroke-width="0.6"/></svg><div class="t" style="left:-974px;margin-left:1036px;top:228px;font-size:11px;letter-spacing:0.85px;color:#c2c2c2;line-height:16px;">ThirdParty</div><svg class="a" style="left:-974px;margin-left:1008px;top:248px" width="8" height="9"><path d="M0 0 L8 4.5 L0 9 Z" fill="#777"/></svg><svg class="a" style="left:-974px;margin-left:1019px;top:245px" width="14" height="13" viewBox="0 0 14 13"><defs></defs><path d="M0.6 1.2 H5 L6 2.4 H13.4 V12.4 H0.6 Z" fill="#101010"/><path d="M1.3 2 H4.6 L5.4 3.2 H12.7 V11.7 H1.3 Z" fill="url(#fg)"/><path d="M1.3 4.6 H12.7" stroke="#e8ecec" stroke-width="0.8"/><path d="M1.3 5.6 H12.7" stroke="#505860" stroke-width="0.6"/></svg><div class="t" style="left:-974px;margin-left:1036px;top:244px;font-size:11px;letter-spacing:0.85px;color:#c2c2c2;line-height:16px;">VoxelEngine</div><svg class="a" style="left:-974px;margin-left:1004px;top:261px" width="14" height="13" viewBox="0 0 14 13"><defs></defs><path d="M0.6 1.2 H5 L6 2.4 H13.4 V12.4 H0.6 Z" fill="#101010"/><path d="M1.3 2 H4.6 L5.4 3.2 H12.7 V11.7 H1.3 Z" fill="url(#fg)"/><path d="M1.3 4.6 H12.7" stroke="#e8ecec" stroke-width="0.8"/><path d="M1.3 5.6 H12.7" stroke="#505860" stroke-width="0.6"/></svg><div class="t" style="left:-974px;margin-left:1022px;top:260px;font-size:11px;letter-spacing:0.85px;color:#c2c2c2;line-height:16px;">Plugins</div><svg class="a" style="left:-974px;margin-left:1004px;top:277px" width="14" height="13" viewBox="0 0 14 13"><defs></defs><path d="M0.6 1.2 H5 L6 2.4 H13.4 V12.4 H0.6 Z" fill="#101010"/><path d="M1.3 2 H4.6 L5.4 3.2 H12.7 V11.7 H1.3 Z" fill="url(#fg)"/><path d="M1.3 4.6 H12.7" stroke="#e8ecec" stroke-width="0.8"/><path d="M1.3 5.6 H12.7" stroke="#505860" stroke-width="0.6"/></svg><div class="t" style="left:-974px;margin-left:1022px;top:276px;font-size:11px;letter-spacing:0.85px;color:#c2c2c2;line-height:16px;">StreamingAssets</div><svg class="a" style="left:-974px;margin-left:994px;top:297px" width="9" height="8"><path d="M0 0 L9 0 L4.5 8 Z" fill="#777"/></svg><svg class="a" style="left:-974px;margin-left:1004px;top:293px" width="14" height="13" viewBox="0 0 14 13"><defs></defs><path d="M0.6 1.2 H5 L6 2.4 H13.4 V12.4 H0.6 Z" fill="#101010"/><path d="M1.3 2 H4.6 L5.4 3.2 H12.7 V11.7 H1.3 Z" fill="url(#fg)"/><path d="M1.3 4.6 H12.7" stroke="#e8ecec" stroke-width="0.8"/><path d="M1.3 5.6 H12.7" stroke="#505860" stroke-width="0.6"/></svg><div class="t" style="left:-974px;margin-left:1022px;top:292px;font-size:11px;letter-spacing:0.85px;color:#c2c2c2;line-height:16px;">Tutorial</div><svg class="a" style="left:-974px;margin-left:1019px;top:309px" width="14" height="13" viewBox="0 0 14 13"><defs></defs><path d="M0.6 1.2 H5 L6 2.4 H13.4 V12.4 H0.6 Z" fill="#101010"/><path d="M1.3 2 H4.6 L5.4 3.2 H12.7 V11.7 H1.3 Z" fill="url(#fg)"/><path d="M1.3 4.6 H12.7" stroke="#e8ecec" stroke-width="0.8"/><path d="M1.3 5.6 H12.7" stroke="#505860" stroke-width="0.6"/></svg><div class="t" style="left:-974px;margin-left:1036px;top:308px;font-size:11px;letter-spacing:0.85px;color:#e4e4e4;line-height:16px;">Ceiling Lamp</div></div>
<div class="a" style="left:1084px;top:0;width:120px;height:632px;overflow:hidden"><div class="a" style="left:-1084px;top:0;width:1204px;height:632px"><div class="a" style="left:1100px;top:102px;width:16px;height:15px;background:linear-gradient(90deg,#5a6470 0 30%,#a08870 30% 60%,#303030 60%)"></div><div class="a" style="left:1101px;top:109px;width:4px;height:3px;background:#eee"></div><div class="a" style="left:1110px;top:113px;width:6px;height:4px;background:#eee;border-radius:3px 3px 0 0"></div><div class="t" style="left:1119px;top:103px;font-size:11px;letter-spacing:0.85px;color:#c2c2c2;line-height:16px;">Ceiling_Lamp_AlbedoTransparency</div><div class="a" style="left:1100px;top:118px;width:16px;height:15px;background:#0c0c0c"></div><div class="a" style="left:1103px;top:123px;width:3px;height:2px;background:#eee"></div><div class="a" style="left:1110px;top:129px;width:6px;height:4px;background:#ddd;border-radius:3px 3px 0 0"></div><div class="t" style="left:1119px;top:119px;font-size:11px;letter-spacing:0.85px;color:#c2c2c2;line-height:16px;">Ceiling_Lamp_Emission</div><div class="a" style="left:1100px;top:134px;width:16px;height:15px;background:linear-gradient(90deg,#c8c8c8 0 25%,#606060 25% 60%,#b0b0b0 60%)"></div><div class="a" style="left:1110px;top:145px;width:6px;height:4px;background:#eee;border-radius:3px 3px 0 0"></div><div class="t" style="left:1119px;top:135px;font-size:11px;letter-spacing:0.85px;color:#c2c2c2;line-height:16px;">Ceiling_Lamp_MetallicSmoothness</div><div class="a" style="left:1100px;top:150px;width:16px;height:15px;background:#8080f0"></div><div class="t" style="left:1119px;top:151px;font-size:11px;letter-spacing:0.85px;color:#c2c2c2;line-height:16px;">Ceiling_Lamp_Normal</div><div class="a" style="left:1100px;top:166px;width:15px;height:15px;border-radius:50%;background:radial-gradient(circle at 45% 30%,#c0d8f0,#5c88b8 55%,#2c4868)"></div><div class="t" style="left:1119px;top:167px;font-size:11px;letter-spacing:0.85px;color:#c2c2c2;line-height:16px;">Ceiling_Mat_Off</div><div class="a" style="left:1100px;top:182px;width:15px;height:15px;border-radius:50%;background:radial-gradient(circle at 45% 30%,#c0d8f0,#5c88b8 55%,#2c4868)"></div><div class="t" style="left:1119px;top:183px;font-size:11px;letter-spacing:0.85px;color:#c2c2c2;line-height:16px;">Ceiling_Mat_On</div><svg class="a" style="left:1089px;top:201px" width="8" height="9"><path d="M0 0 L8 4.5 L0 9 Z" fill="#777"/></svg><svg class="a" style="left:1100px;top:198px" width="16" height="16" viewBox="0 0 16 16"><path d="M7 1 L13 3.5 V11 L7 14.5 L1 11 V3.5 Z" fill="#6aa8e0"/><path d="M1 3.5 L7 6 L13 3.5 L7 1 Z" fill="#b8dcf8"/><path d="M7 6 V14.5 L1 11 V3.5 Z" fill="#4a88c8"/><path d="M9 9 H13 L15 11 V16 H9 Z" fill="#fff" stroke="#333" stroke-width="0.6"/></svg><div class="t" style="left:1119px;top:199px;font-size:11px;letter-spacing:0.85px;color:#c2c2c2;line-height:16px;">CeilingLamp</div><svg class="a" style="left:1089px;top:217px" width="8" height="9"><path d="M0 0 L8 4.5 L0 9 Z" fill="#777"/></svg><svg class="a" style="left:1100px;top:214px" width="16" height="16" viewBox="0 0 16 16"><path d="M7 1 L13 3.5 V11 L7 14.5 L1 11 V3.5 Z" fill="#6aa8e0"/><path d="M1 3.5 L7 6 L13 3.5 L7 1 Z" fill="#b8dcf8"/><path d="M7 6 V14.5 L1 11 V3.5 Z" fill="#4a88c8"/><path d="M9 9 H13 L15 11 V16 H9 Z" fill="#fff" stroke="#333" stroke-width="0.6"/></svg><div class="t" style="left:1119px;top:215px;font-size:11px;letter-spacing:0.85px;color:#c2c2c2;line-height:16px;">CeilingLamp_Col</div><svg class="a" style="left:1089px;top:233px" width="8" height="9"><path d="M0 0 L8 4.5 L0 9 Z" fill="#777"/></svg><svg class="a" style="left:1100px;top:231px" width="16" height="14" viewBox="0 0 16 14" stroke="#d8d070" stroke-width="1.2"><path d="M2 2 L7 7 M14 1 L8 6 M1 9 L7 7 M8 7 L13 12 M7 7 L6 13"/><circle cx="7.5" cy="7" r="2" fill="#fff" stroke="none"/></svg><div class="t" style="left:1119px;top:231px;font-size:11px;letter-spacing:0.85px;color:#c2c2c2;line-height:16px;">celing_lamp_icon</div></div></div>
</body></html>
